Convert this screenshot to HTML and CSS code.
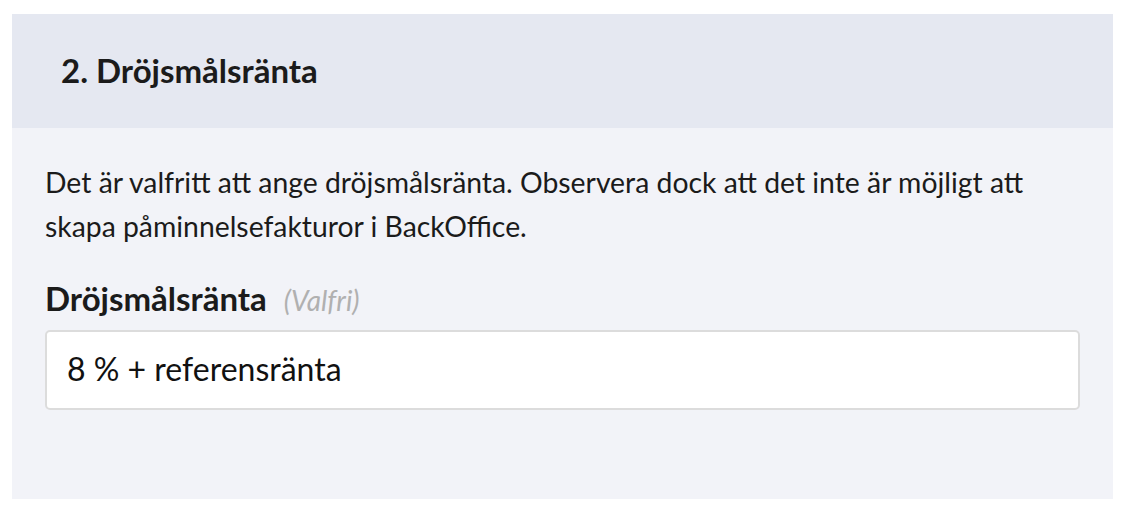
FILE: index.html
```html
<!DOCTYPE html>
<html lang="sv">
<head>
<meta charset="utf-8">
<link rel="stylesheet" href="styles.css">
</head>
<body>
<section class="card">
  <header class="card-header">
    <h2 class="card-title">2. Dröjsmålsränta</h2>
  </header>
  <div class="card-body">
    <p class="intro">Det är valfritt att ange dröjsmålsränta. Observera dock att det inte är möjligt att skapa påminnelsefakturor i BackOffice.</p>
    <label class="field-label" for="rate">Dröjsmålsränta <span class="optional">(Valfri)</span></label>
    <div class="input" id="rate">8 % + referensränta</div>
  </div>
</section>
</body>
</html>
```
FILE: styles.css
```css
html, body {
  margin: 0;
  padding: 0;
  background: #ffffff;
  font-family: Lato, "Noto Sans", sans-serif;
  color: #1b1b1b;
}
.card {
  margin: 14px 12px 0 12px;
  background: #f2f3f8;
  height: 485px;
  display: flex;
  flex-direction: column;
}
.card-header {
  background: #e5e8f1;
  height: 114px;
  display: flex;
  align-items: center;
  padding-left: 49px;
  padding-bottom: 3px;
  box-sizing: border-box;
}
.card-title {
  margin: 0;
  font-size: 33px;
  font-weight: 700;
  color: #1b1b1b;
}
.card-body {
  padding: 0 33px;
  display: flex;
  flex-direction: column;
}
.intro {
  margin: 32px 0 0 0;
  font-size: 28.35px;
  line-height: 44px;
}
.field-label {
  margin-top: 30px;
  font-size: 33px;
  font-weight: 700;
  line-height: 40px;
}
.optional {
  font-weight: 400;
  font-style: italic;
  font-size: 28px;
  color: #b0b0b0;
  margin-left: 9px;
}
.input {
  margin-top: 10px;
  box-sizing: border-box;
  height: 80px;
  background: #ffffff;
  border: 2px solid #dcdcdc;
  border-radius: 5px;
  display: flex;
  align-items: center;
  padding-left: 20px;
  padding-bottom: 4px;
  font-size: 32px;
  color: #111111;
}
```
